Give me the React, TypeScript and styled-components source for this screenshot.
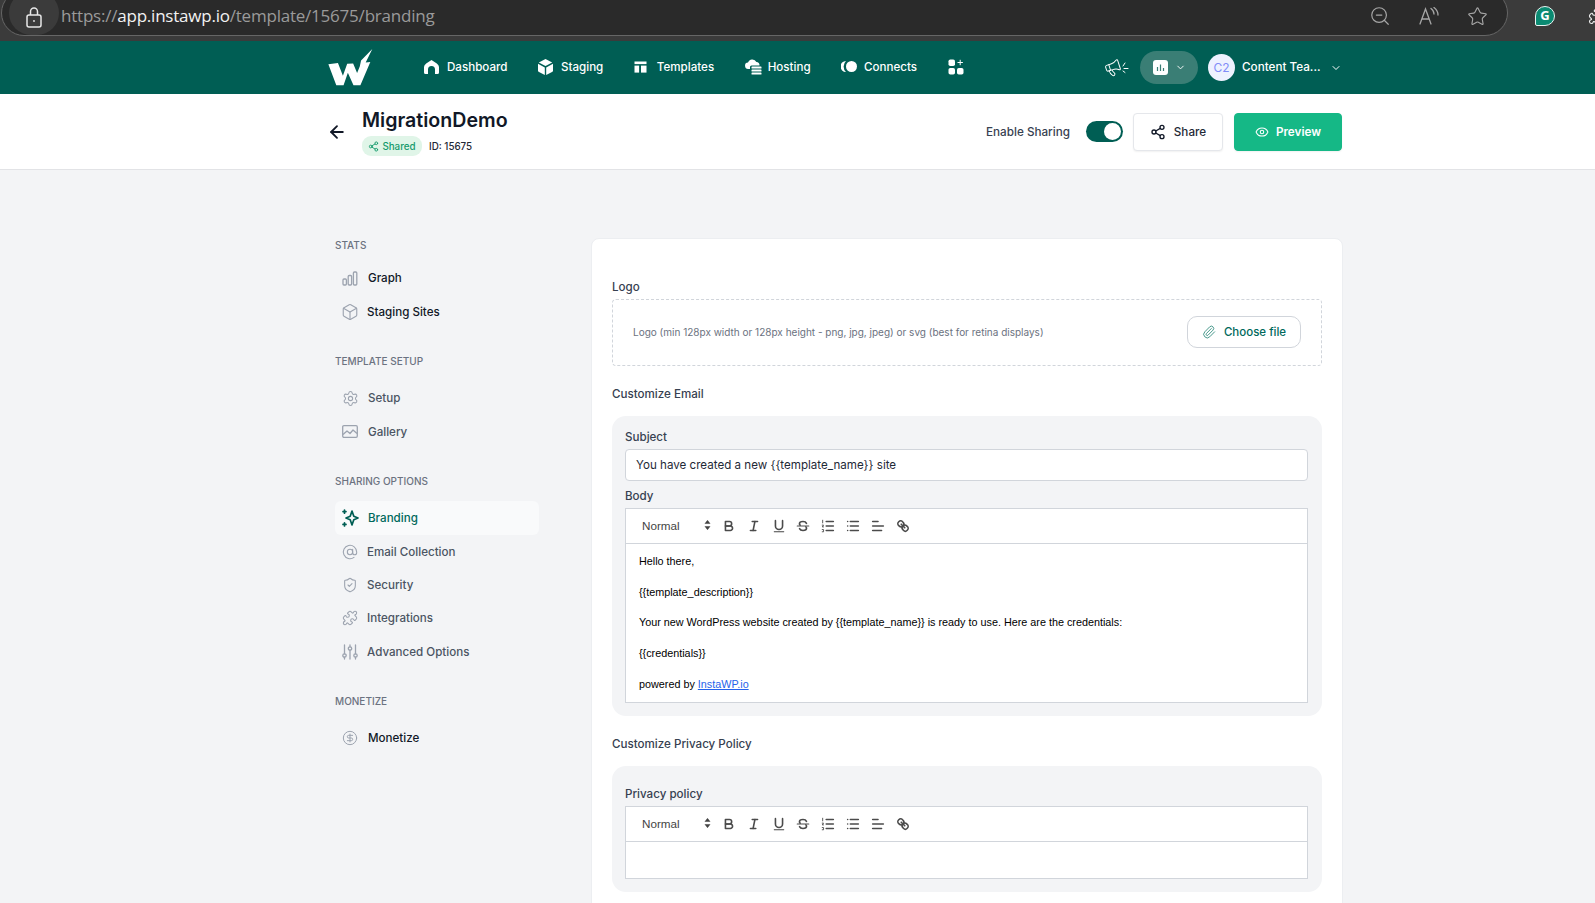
import React from "react";
import styled, { createGlobalStyle } from "styled-components";
import {
  ArrowLeft,
  AtSign,
  Box,
  ChevronDown,
  CircleDollarSign,
  Eye,
  Megaphone,
  Paperclip,
  Puzzle,
  Settings,
  Share2,
  ShieldCheck,
  Star,
  ZoomOut,
} from "lucide-react";

const GlobalStyle = createGlobalStyle`
  html, body {
    margin: 0;
    padding: 0;
    background: #f3f4f6;
    font-family: "Inter", "Liberation Sans", sans-serif;
    color: #111827;
  }
  * { box-sizing: border-box; }
`;

const Page = styled.div`
  width: 1595px;
  height: 903px;
  overflow: hidden;
  display: flex;
  flex-direction: column;
`;

/* browser chrome */
const BrowserBar = styled.div`
  height: 41px;
  flex: none;
  background: #3b3b3b;
  display: flex;
  align-items: flex-start;
  overflow: hidden;
`;

const AddressBar = styled.div`
  width: 1507px;
  height: 46px;
  flex: none;
  margin-top: -10px;
  margin-left: 1px;
  padding: 0 19px 0 7px;
  background: #2a2a2a;
  border: 1.5px solid #666;
  border-radius: 23px;
  display: flex;
  align-items: center;
`;

const LockWrap = styled.div`
  width: 50px;
  height: 44px;
  border-radius: 22px;
  background: #3b3b3b;
  color: #e8e8e8;
  display: flex;
  align-items: center;
  justify-content: center;
  padding-top: 8px;
`;

const Url = styled.div`
  margin-left: 2px;
  padding-top: 4px;
  font-family: "Open Sans", sans-serif;
  font-size: 17px;
  letter-spacing: -0.22px;
  color: #9a9a9a;
  b {
    font-weight: 400;
    color: #f2f2f2;
  }
`;

const ChromeIcons = styled.div`
  margin-left: auto;
  padding-top: 6px;
  display: flex;
  align-items: center;
  gap: 28px;
  color: #a6a6a6;
`;

const ExtensionIcons = styled.div`
  flex: none;
  margin-left: 27px;
  padding-top: 6px;
  display: flex;
  align-items: center;
  gap: 33px;
  color: #eee;
`;

const GrammarlyBadge = styled.div`
  width: 20px;
  height: 20px;
  border-radius: 50% 50% 50% 2px;
  background: #0b8a72;
  border: 1.5px solid #e9f3f1;
  color: #fff;
  font-family: "Open Sans", sans-serif;
  font-weight: 700;
  font-size: 13px;
  line-height: 17px;
  text-align: center;
`;

/* top nav */
const TopNav = styled.div`
  height: 53px;
  flex: none;
  background: #005e54;
  padding-left: 328px;
  display: flex;
  align-items: center;
`;

const NavInner = styled.div`
  width: 1014px;
  display: flex;
  align-items: center;
  color: #fff;
`;

const NavLinks = styled.div`
  margin: -2px 0 0 51px;
  display: flex;
  align-items: center;
  gap: 30.5px;
`;

const NavLink = styled.div<{ $gap?: number }>`
  display: flex;
  align-items: center;
  gap: ${(p) => p.$gap ?? 8}px;
  font-size: 11.6px;
  font-weight: 500;
`;

const NavRight = styled.div`
  margin-left: auto;
  display: flex;
  align-items: center;
`;

const ProjectPill = styled.div`
  width: 58px;
  height: 33px;
  margin-left: 11px;
  border-radius: 17px;
  background: #3a7e75;
  display: flex;
  align-items: center;
  justify-content: center;
  gap: 7px;
`;

const Avatar = styled.div`
  width: 27px;
  height: 27px;
  margin-left: 10px;
  border-radius: 50%;
  background: #eef2ff;
  color: #818cf8;
  font-size: 12px;
  display: flex;
  align-items: center;
  justify-content: center;
`;

const TeamName = styled.div`
  margin: -2px 10px 0 7px;
  width: 78px;
  font-size: 11.7px;
  font-weight: 500;
  white-space: nowrap;
`;

/* template header */
const SubHeader = styled.div`
  height: 76px;
  flex: none;
  background: #fff;
  border-bottom: 1px solid #e2e3e6;
  padding-left: 328px;
  display: flex;
  align-items: center;
`;

const SubInner = styled.div`
  width: 1014px;
  display: flex;
  align-items: center;
`;

const BackArrow = styled(ArrowLeft)`
  margin-left: -1px;
  flex: none;
`;

const TitleBlock = styled.div`
  margin: 1px 0 0 15px;
`;

const Title = styled.div`
  font-size: 19.6px;
  line-height: 24px;
  font-weight: 600;
  color: #111827;
`;

const MetaRow = styled.div`
  margin-top: 4px;
  display: flex;
  align-items: center;
  gap: 7px;
  font-size: 9.8px;
  font-weight: 500;
  color: #1f2937;
`;

const SharedBadge = styled.div`
  width: 60px;
  height: 20px;
  border-radius: 9px;
  background: #e0f5e8;
  color: #159a6c;
  display: flex;
  align-items: center;
  justify-content: center;
  gap: 3px;
`;

const Actions = styled.div`
  margin-left: auto;
  display: flex;
  align-items: center;
`;

const EnableLabel = styled.div`
  font-size: 11.7px;
  font-weight: 500;
  color: #374151;
`;

const Toggle = styled.div`
  width: 37px;
  height: 21px;
  margin: 0 10px 0 16px;
  padding: 2px;
  border-radius: 11px;
  background: #005e54;
  display: flex;
  justify-content: flex-end;
  span {
    width: 17px;
    height: 17px;
    border-radius: 50%;
    background: #fff;
  }
`;

const ActionButton = styled.div<{ $primary?: boolean }>`
  height: 38px;
  width: ${(p) => (p.$primary ? 108 : 90)}px;
  margin-left: ${(p) => (p.$primary ? 11 : 0)}px;
  border-radius: 4px;
  border: 1px solid ${(p) => (p.$primary ? "#15b886" : "#e5e7eb")};
  background: ${(p) => (p.$primary ? "#15b886" : "#fff")};
  color: ${(p) => (p.$primary ? "#fff" : "#1f2937")};
  box-shadow: 0 1px 2px rgba(0, 0, 0, 0.06);
  font-size: 11.7px;
  font-weight: ${(p) => (p.$primary ? 600 : 500)};
  display: flex;
  align-items: center;
  justify-content: center;
  gap: ${(p) => (p.$primary ? 7 : 8)}px;
`;

/* page body */
const Body = styled.div`
  flex: 1;
  min-height: 0;
  padding: 68px 0 0 335px;
  display: flex;
  align-items: flex-start;
`;

const Sidebar = styled.div`
  width: 256px;
  flex: none;
  padding: 1px 52px 0 0;
`;

const SectionTitle = styled.div<{ $first?: boolean }>`
  height: 12px;
  line-height: 12px;
  margin: ${(p) => (p.$first ? "0 0 10.5px" : "26.7px 0 14.5px")};
  font-size: 10px;
  font-weight: 500;
  color: #6b7280;
`;

const SideItem = styled.div<{ $active?: boolean; $dark?: boolean; $wide?: boolean }>`
  height: 33.4px;
  padding-left: 7px;
  display: flex;
  align-items: center;
  gap: ${(p) => (p.$wide ? 10 : 9)}px;
  border-radius: 6px;
  font-size: 11.6px;
  font-weight: 500;
  background: ${(p) => (p.$active ? "#f9fafb" : "transparent")};
  color: ${(p) => (p.$active ? "#00695c" : p.$dark ? "#111827" : "#4b5563")};
`;

const SideIcon = styled.span<{ $active?: boolean }>`
  width: 16px;
  flex: none;
  display: flex;
  justify-content: center;
  color: ${(p) => (p.$active ? "#005e54" : "#9ca3af")};
  svg {
    flex: none;
  }
`;

const Card = styled.div`
  width: 752px;
  height: 800px;
  flex: none;
  padding: 40px 20px;
  background: #fff;
  border: 1px solid #eceef1;
  border-radius: 8px;
`;

const FieldLabel = styled.div<{ $mt?: number; $mb?: number }>`
  height: 16px;
  line-height: 16px;
  margin-top: ${(p) => p.$mt ?? 0}px;
  margin-bottom: ${(p) => p.$mb ?? 4}px;
  font-size: 11.6px;
  font-weight: 500;
  color: #374151;
`;

const Dropzone = styled.div`
  height: 67px;
  padding: 0 20px 2px;
  border: 1px dashed #d1d5db;
  border-radius: 4px;
  display: flex;
  align-items: center;
  justify-content: space-between;
  font-size: 10px;
  color: #6b7280;
`;

const ChooseFile = styled.div`
  width: 114px;
  height: 32px;
  border: 1px solid #d1d5db;
  border-radius: 10px;
  display: flex;
  align-items: center;
  justify-content: center;
  gap: 8px;
  font-size: 11.5px;
  font-weight: 500;
  color: #00695c;
  svg {
    color: #2f8a7c;
  }
`;

const Panel = styled.div<{ $top: number }>`
  padding: ${(p) => p.$top}px 14px 13px 13px;
  background: #f3f4f6;
  border-radius: 14px;
`;

const TextInput = styled.div`
  height: 32px;
  padding: 0 10px;
  background: #fff;
  border: 1px solid #d1d5db;
  border-radius: 4px;
  display: flex;
  align-items: center;
  font-size: 11.6px;
  color: #1f2937;
`;

const Editor = styled.div`
  background: #fff;
  border: 1px solid #d1d5db;
`;

const Toolbar = styled.div`
  height: 35px;
  padding-left: 16px;
  border-bottom: 1px solid #d1d5db;
  display: flex;
  align-items: center;
`;

const Picker = styled.div`
  width: 74.6px;
  padding: 0 6px 2px 0;
  display: flex;
  align-items: center;
  justify-content: space-between;
  font-family: "Liberation Sans", sans-serif;
  font-size: 11.7px;
  color: #444;
`;

const ToolButton = styled.div`
  width: 24.8px;
  height: 18px;
  display: flex;
  align-items: center;
  justify-content: center;
`;

const EditorBody = styled.div<{ $empty?: boolean }>`
  min-height: ${(p) => (p.$empty ? 36 : 0)}px;
  padding: 10px 13px;
  font-family: "Liberation Sans", sans-serif;
  font-size: 10.8px;
  line-height: 15.35px;
  color: #000;
  p {
    margin: 0 0 15.35px;
  }
  p:last-child {
    margin-bottom: 0;
  }
  a {
    color: #2563eb;
    text-decoration: underline;
  }
`;

const QlIcon = ({ children }: { children: React.ReactNode }) => (
  <svg width="16" height="16" viewBox="0 0 18 18" fill="none" stroke="#4b4b4b" strokeWidth="1.8" strokeLinecap="round" strokeLinejoin="round">
    {children}
  </svg>
);

const QuillToolbar = () => (
  <Toolbar>
    <Picker>
      Normal
      <svg width="7" height="10" viewBox="0 0 7 10" fill="#444">
        <path d="M3.5 0L6.5 3.8H0.5zM3.5 10L0.5 6.2H6.5z" />
      </svg>
    </Picker>
    <ToolButton>
      <QlIcon>
        <path d="M5,4H9.5A2.5,2.5,0,0,1,12,6.5v0A2.5,2.5,0,0,1,9.5,9H5V4Z" />
        <path d="M5,9h5.5A2.5,2.5,0,0,1,13,11.5v0A2.5,2.5,0,0,1,10.5,14H5V9Z" />
      </QlIcon>
    </ToolButton>
    <ToolButton>
      <QlIcon>
        <line x1="7" x2="13" y1="4" y2="4" />
        <line x1="5" x2="11" y1="14" y2="14" />
        <line x1="8" x2="10" y1="14" y2="4" />
      </QlIcon>
    </ToolButton>
    <ToolButton>
      <QlIcon>
        <path d="M5,3V9a4,4,0,0,0,4,4h0a4,4,0,0,0,4-4V3" />
        <rect x="3" y="15" width="12" height="1" rx=".5" fill="#444" stroke="none" />
      </QlIcon>
    </ToolButton>
    <ToolButton>
      <QlIcon>
        <line x1="15.5" x2="2.5" y1="9" y2="9" strokeWidth="1.2" />
        <path d="M12.9 6C12.4 4.8 11 4 9 4 6.8 4 5 5 5 6.5c0 .7.3 1.2.8 1.6" />
        <path d="M5.1 12c.5 1.2 1.9 2 3.9 2 2.2 0 4-1 4-2.5 0-.7-.3-1.2-.8-1.6" />
      </QlIcon>
    </ToolButton>
    <ToolButton>
      <QlIcon>
        <line x1="7" x2="15" y1="4" y2="4" />
        <line x1="7" x2="15" y1="9" y2="9" />
        <line x1="7" x2="15" y1="14" y2="14" />
        <path d="M3 2.5v3M2.5 8h1.5l-1.5 2h1.5M2.5 13h1.5v2.5h-1.5" strokeWidth="1" />
      </QlIcon>
    </ToolButton>
    <ToolButton>
      <QlIcon>
        <line x1="6" x2="15" y1="4" y2="4" />
        <line x1="6" x2="15" y1="9" y2="9" />
        <line x1="6" x2="15" y1="14" y2="14" />
        <line x1="3" x2="3" y1="4" y2="4" />
        <line x1="3" x2="3" y1="9" y2="9" />
        <line x1="3" x2="3" y1="14" y2="14" />
      </QlIcon>
    </ToolButton>
    <ToolButton>
      <QlIcon>
        <line x1="3" x2="15" y1="9" y2="9" />
        <line x1="3" x2="13" y1="14" y2="14" />
        <line x1="3" x2="9" y1="4" y2="4" />
      </QlIcon>
    </ToolButton>
    <ToolButton>
      <QlIcon>
        <line x1="7" x2="11" y1="7" y2="11" />
        <path d="M8.9,4.577a3.476,3.476,0,0,1,.36,4.679A3.476,3.476,0,0,1,4.577,8.9C3.185,7.5,2.035,6.4,4.217,4.217S7.5,3.185,8.9,4.577Z" />
        <path d="M13.423,9.1a3.476,3.476,0,0,0-4.679-.36,3.476,3.476,0,0,0,.36,4.679c1.392,1.392,2.5,2.542,4.679.36S14.815,10.5,13.423,9.1Z" />
      </QlIcon>
    </ToolButton>
  </Toolbar>
);

const Logo = () => (
  <svg width="45" height="37" viewBox="25 27 134 112" fill="#fff">
    <path d="M25 73L54 69L69 108L82 72L100 71L112 100L120 80L124 62L158 27L138 68L152 66L122 137H101L84 99L71 137H49Z" />
  </svg>
);

const PadLock = () => (
  <svg width="16" height="21" viewBox="0 0 16 21" fill="none" stroke="currentColor" strokeWidth="1.5">
    <path d="M4.5 8V4.5a3.5 3.5 0 0 1 7 0V8" />
    <rect x="1" y="8" width="14" height="12" rx="2" />
    <circle cx="8" cy="14" r="0.9" fill="currentColor" stroke="none" />
  </svg>
);

const ReadAloud = () => (
  <svg width="20" height="18" viewBox="0 0 20 18" fill="none" stroke="currentColor" strokeWidth="1.3" strokeLinecap="round">
    <path d="M1 17L6.5 2L12 17M3 12H10" />
    <path d="M12 1.5C14 3 15 5 15 7M15 0.5C17.5 2.5 19 5 19 8" />
  </svg>
);

const GraphIcon = () => (
  <svg width="16" height="15" viewBox="0 0 16 15" fill="none" stroke="currentColor" strokeWidth="1.3">
    <rect x="1" y="8" width="3.4" height="6" rx="1" />
    <rect x="6.2" y="4.5" width="3.4" height="9.5" rx="1" />
    <rect x="11.4" y="1" width="3.4" height="13" rx="1" />
  </svg>
);

const GalleryIcon = () => (
  <svg width="16" height="13" viewBox="0 0 16 13" fill="none" stroke="currentColor" strokeWidth="1.3" strokeLinejoin="round">
    <rect x="0.7" y="0.7" width="14.6" height="11.6" rx="1.2" />
    <path d="M1 9.5L5 6L8 8.5L11 5L15 8.5" />
  </svg>
);

const SparkIcon = () => (
  <svg width="17" height="18" viewBox="0 0 17 18" fill="none" stroke="currentColor" strokeWidth="1.7" strokeLinejoin="round" strokeLinecap="round">
    <path d="M10 2L11.8 7.2L16 9L11.8 10.8L10 16L8.2 10.8L4 9L8.2 7.2Z" />
    <path d="M2.5 1V4.2M1 2.6H4M2.5 13.8V17M1 15.4H4" />
  </svg>
);

const SlidersIcon = () => (
  <svg width="16" height="16" viewBox="0 0 16 16" fill="none" stroke="currentColor" strokeWidth="1.3" strokeLinecap="round">
    <path d="M2.5 1V9.8M2.5 13.2V15M8 1V2.8M8 6.2V15M13.5 1V9.8M13.5 13.2V15" />
    <circle cx="2.5" cy="11.5" r="1.7" />
    <circle cx="8" cy="4.5" r="1.7" />
    <circle cx="13.5" cy="11.5" r="1.7" />
  </svg>
);

const HomeIcon = () => (
  <svg width="15" height="14" viewBox="0 0 15 14" fill="#fff">
    <path d="M7.5 0L12.8 3.4Q15 5 15 7V12.5Q15 14 13.5 14H11V9.5A3.5 3.5 0 0 0 4 9.5V14H1.5Q0 14 0 12.5V7Q0 5 2.2 3.4Z" />
  </svg>
);

const CubeIcon = () => (
  <svg width="15" height="16" viewBox="0 0 15 16" fill="#fff">
    <path d="M7.5 0L14.2 3.4L7.5 7L0.8 3.4Z" />
    <path d="M0 4.8L6.8 8.4V16L1 13Q0 12.4 0 11.4Z" />
    <path d="M15 4.8L8.2 8.4V16L14 13Q15 12.4 15 11.4Z" />
  </svg>
);

const TemplateIcon = () => (
  <svg width="13" height="12" viewBox="0 0 13 12" fill="#fff">
    <rect x="0.5" y="0.5" width="12" height="2.6" />
    <rect x="0.5" y="4.6" width="4.6" height="7" />
    <rect x="7" y="4.6" width="5.5" height="7" />
  </svg>
);

const HostingIcon = () => (
  <svg width="17" height="16" viewBox="0 0 17 16" fill="#fff">
    <path d="M3.5 10A3.2 3.2 0 0 1 3 3.6 4.5 4.5 0 0 1 11.4 3 3 3 0 0 1 14.5 6.4H6.5Q5 6.4 5 8V10Z" />
    <rect x="6.5" y="7.6" width="10" height="2" rx="0.6" />
    <rect x="6.5" y="10.6" width="10" height="2" rx="0.6" />
    <rect x="6.5" y="13.6" width="10" height="2" rx="0.6" />
  </svg>
);

const ConnectIcon = () => (
  <svg width="16" height="11" viewBox="0 0 16 11" fill="#fff">
    <path d="M5 0A5.5 5.5 0 0 0 5 11A7.5 7.5 0 0 1 5 0Z" />
    <circle cx="10.5" cy="5.5" r="5.5" />
  </svg>
);

const AppsIcon = () => (
  <svg width="16" height="16" viewBox="0 0 16 16" fill="#fff">
    <rect x="0.5" y="0.5" width="6.5" height="6.5" rx="1.8" />
    <rect x="0.5" y="9" width="6.5" height="6.5" rx="1.8" />
    <rect x="9" y="9" width="6.5" height="6.5" rx="1.8" />
    <path d="M12.2 0.8V6.2M9.5 3.5H14.9" stroke="#fff" strokeWidth="1" fill="none" />
  </svg>
);

const BarsTile = () => (
  <svg width="15" height="15" viewBox="0 0 15 15">
    <rect width="15" height="15" rx="3" fill="#fff" />
    <path d="M4.5 7V11M7.5 4.5V11M10.5 8V11" stroke="#3a7e75" strokeWidth="1.2" />
  </svg>
);

const Rays = () => (
  <svg width="7" height="12" viewBox="0 0 7 12" fill="none" stroke="#fff" strokeWidth="1" strokeLinecap="round">
    <path d="M1 4L3 1M2 6.5H6M1 9L3 10.5" />
  </svg>
);

const BellHorn = styled(Megaphone)`
  transform: rotate(-18deg);
`;

export default function App() {
  return (
    <Page>
      <GlobalStyle />
      <BrowserBar>
        <AddressBar>
          <LockWrap>
            <PadLock />
          </LockWrap>
          <Url>
            https://<b>app.instawp.io</b>/template/15675/branding
          </Url>
          <ChromeIcons>
            <ZoomOut size={22} strokeWidth={1.3} />
            <ReadAloud />
            <Star size={21} strokeWidth={1.3} />
          </ChromeIcons>
        </AddressBar>
        <ExtensionIcons>
          <GrammarlyBadge>G</GrammarlyBadge>
          <Puzzle size={18} strokeWidth={1.5} />
        </ExtensionIcons>
      </BrowserBar>

      <TopNav>
        <NavInner>
          <Logo />
          <NavLinks>
            <NavLink><HomeIcon />Dashboard</NavLink>
            <NavLink><CubeIcon />Staging</NavLink>
            <NavLink $gap={10}><TemplateIcon />Templates</NavLink>
            <NavLink $gap={6}><HostingIcon />Hosting</NavLink>
            <NavLink $gap={7}><ConnectIcon />Connects</NavLink>
            <AppsIcon />
          </NavLinks>
          <NavRight>
            <BellHorn size={18} color="#fff" strokeWidth={1.3} />
            <Rays />
            <ProjectPill>
              <BarsTile />
              <ChevronDown size={11} color="#fff" strokeWidth={2} />
            </ProjectPill>
            <Avatar>C2</Avatar>
            <TeamName>Content Tea...</TeamName>
            <ChevronDown size={12} color="#fff" strokeWidth={2} />
          </NavRight>
        </NavInner>
      </TopNav>

      <SubHeader>
        <SubInner>
          <BackArrow size={20} color="#111827" strokeWidth={2.2} />
          <TitleBlock>
            <Title>MigrationDemo</Title>
            <MetaRow>
              <SharedBadge>
                <Share2 size={11} />
                Shared
              </SharedBadge>
              ID: 15675
            </MetaRow>
          </TitleBlock>
          <Actions>
            <EnableLabel>Enable Sharing</EnableLabel>
            <Toggle><span /></Toggle>
            <ActionButton>
              <Share2 size={16} strokeWidth={2} color="#111827" />
              Share
            </ActionButton>
            <ActionButton $primary>
              <Eye size={14} strokeWidth={1.8} />
              Preview
            </ActionButton>
          </Actions>
        </SubInner>
      </SubHeader>

      <Body>
        <Sidebar>
          <SectionTitle $first>STATS</SectionTitle>
          <SideItem $dark $wide><SideIcon><GraphIcon /></SideIcon>Graph</SideItem>
          <SideItem $dark><SideIcon><Box size={18} strokeWidth={1.5} /></SideIcon>Staging Sites</SideItem>

          <SectionTitle>TEMPLATE SETUP</SectionTitle>
          <SideItem $wide><SideIcon><Settings size={17} strokeWidth={1.5} /></SideIcon>Setup</SideItem>
          <SideItem $wide><SideIcon><GalleryIcon /></SideIcon>Gallery</SideItem>

          <SectionTitle>SHARING OPTIONS</SectionTitle>
          <SideItem $active $wide><SideIcon $active><SparkIcon /></SideIcon>Branding</SideItem>
          <SideItem><SideIcon><AtSign size={16} strokeWidth={1.6} /></SideIcon>Email Collection</SideItem>
          <SideItem><SideIcon><ShieldCheck size={16} strokeWidth={1.6} /></SideIcon>Security</SideItem>
          <SideItem><SideIcon><Puzzle size={16} strokeWidth={1.6} /></SideIcon>Integrations</SideItem>
          <SideItem><SideIcon><SlidersIcon /></SideIcon>Advanced Options</SideItem>

          <SectionTitle>MONETIZE</SectionTitle>
          <SideItem $dark $wide><SideIcon><CircleDollarSign size={16} strokeWidth={1.5} /></SideIcon>Monetize</SideItem>
        </Sidebar>

        <Card>
          <FieldLabel>Logo</FieldLabel>
          <Dropzone>
            Logo (min 128px width or 128px height - png, jpg, jpeg) or svg (best for retina displays)
            <ChooseFile>
              <Paperclip size={14} strokeWidth={1.5} />
              Choose file
            </ChooseFile>
          </Dropzone>

          <FieldLabel $mt={20} $mb={14}>Customize Email</FieldLabel>
          <Panel $top={13}>
            <FieldLabel>Subject</FieldLabel>
            <TextInput>You have created a new {"{{template_name}}"} site</TextInput>
            <FieldLabel $mt={7}>Body</FieldLabel>
            <Editor>
              <QuillToolbar />
              <EditorBody>
                <p>Hello there,</p>
                <p>{"{{template_description}}"}</p>
                <p>Your new WordPress website created by {"{{template_name}}"} is ready to use. Here are the credentials:</p>
                <p>{"{{credentials}}"}</p>
                <p>powered by <a>InstaWP.io</a></p>
              </EditorBody>
            </Editor>
          </Panel>

          <FieldLabel $mt={20} $mb={14}>Customize Privacy Policy</FieldLabel>
          <Panel $top={20}>
            <FieldLabel>Privacy policy</FieldLabel>
            <Editor>
              <QuillToolbar />
              <EditorBody $empty />
            </Editor>
          </Panel>
        </Card>
      </Body>
    </Page>
  );
}
